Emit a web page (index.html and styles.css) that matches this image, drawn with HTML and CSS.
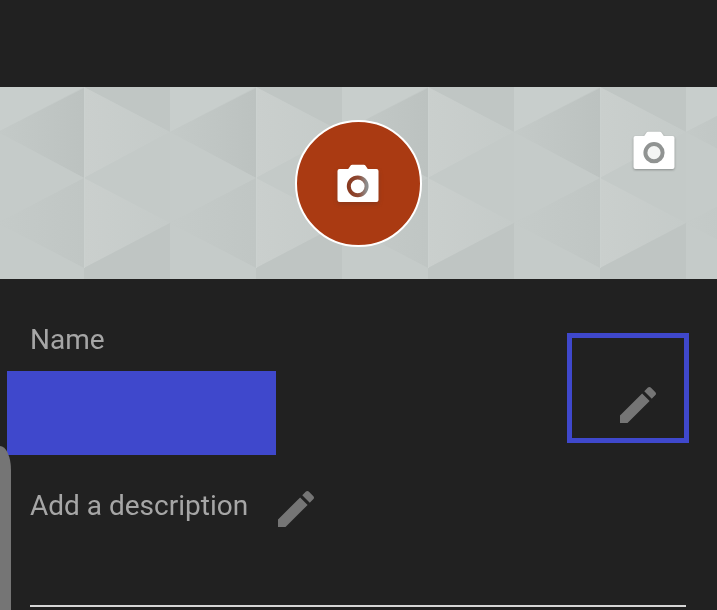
FILE: index.html
```html
<!DOCTYPE html>
<html lang="en">
<head>
<meta charset="utf-8">
<title>Edit channel</title>
<link rel="stylesheet" href="styles.css">
</head>
<body>
<svg class="defs" width="0" height="0" aria-hidden="true">
  <defs>
    <path id="cam" d="M2.5 5H11.2L13.6 1.6Q14.2 .8 15.2 .8H26.8Q27.8 .8 28.4 1.6L30.8 5H39.5Q41.5 5 41.5 7V36Q41.5 38 39.5 38H2.5Q.5 38 .5 36V7Q.5 5 2.5 5Z"/>
    <path id="pen" d="M3 17.25V21h3.75L17.81 9.94l-3.75-3.75L3 17.25zM20.71 7.04c.39-.39.39-1.02 0-1.41l-2.34-2.34c-.39-.39-1.02-.39-1.41 0l-1.83 1.83 3.75 3.75 1.83-1.83z"/>
    <linearGradient id="ring-grad" x1="0" x2="1" y1="0" y2="0">
      <stop offset="0" stop-color="#8a3a20"/>
      <stop offset="0.55" stop-color="#8f4a35"/>
      <stop offset="1" stop-color="#8e8e8e"/>
    </linearGradient>
    <linearGradient id="shade" x1="0" x2="1" y1="0" y2="0">
      <stop offset="0" stop-color="#c4cac8"/>
      <stop offset="1" stop-color="#bcc2c0"/>
    </linearGradient>
    <linearGradient id="shade-soft" x1="0" x2="1" y1="0" y2="0">
      <stop offset="0" stop-color="#c5cbc9"/>
      <stop offset="1" stop-color="#c0c6c4"/>
    </linearGradient>
    <linearGradient id="shine" x1="0" x2="1" y1="0" y2="0">
      <stop offset="0" stop-color="#cacfcd"/>
      <stop offset="1" stop-color="#c5cbc9"/>
    </linearGradient>
  </defs>
</svg>
<div class="top-spacer"></div>
<header class="banner">
  <svg class="pattern" width="717" height="192" viewBox="0 0 717 192" aria-hidden="true">
    <defs>
      <pattern id="tri" width="172" height="192" patternUnits="userSpaceOnUse" x="-2">
        <rect width="172" height="192" fill="#c4cac8"/>
        <polygon points="0,0 86,0 0,45" fill="#c8cecc"/>
        <polygon points="0,45 86,1 86,91" fill="url(#shade)"/>
        <polygon points="86,0 172,0 172,45" fill="#c0c6c4"/>
        <polygon points="86,0 172,45 86,91" fill="url(#shine)"/>
        <polygon points="172,45 86,91 172,136" fill="#c4cac8"/>
        <polygon points="0,45 86,91 0,136" fill="#c5cbc9"/>
        <polygon points="0,136 86,91 86,181" fill="url(#shade-soft)"/>
        <polygon points="86,91 172,136 86,181" fill="url(#shine)"/>
        <polygon points="86,181 172,136 172,192 86,192" fill="#bfc5c3"/>
        <polygon points="0,136 86,181 86,192 0,192" fill="#c5cbc9"/>
        <rect x="86" width="1" height="181" fill="#cbd1cf"/>
      </pattern>
    </defs>
    <rect width="717" height="192" fill="url(#tri)"/>
  </svg>
  <div class="avatar">
    <svg class="camera" width="42" height="39" viewBox="0 0 42 39" aria-hidden="true">
      <use href="#cam" fill="#fff"/>
      <circle cx="20.7" cy="22.3" r="8.9" fill="#fff" stroke="url(#ring-grad)" stroke-width="4"/>
    </svg>
  </div>
  <svg class="camera-corner" width="42" height="39" viewBox="0 0 42 39" aria-hidden="true">
    <use href="#cam" fill="#fff"/>
    <circle cx="21" cy="21.7" r="8.6" fill="#f4f5f4" stroke="#909392" stroke-width="4"/>
  </svg>
</header>
<main class="form">
  <section class="name-row">
    <div class="name-field">
      <div class="label name-label">Name</div>
      <div class="redacted"></div>
    </div>
    <div class="highlight">
      <svg class="pencil" width="48" height="48" viewBox="0 0 24 24" aria-hidden="true"><use href="#pen"/></svg>
    </div>
  </section>
  <section class="description-row">
    <div class="label">Add a description</div>
    <svg class="pencil" width="48" height="48" viewBox="0 0 24 24" aria-hidden="true"><use href="#pen"/></svg>
  </section>
  <div class="underline"></div>
</main>
<div class="side-handle"></div>
</body>
</html>
```
FILE: styles.css
```css
* { box-sizing: border-box; }
html, body { margin: 0; height: 100%; }
body {
  position: relative;
  overflow: hidden;
  background: #212121;
  font-family: Roboto, "Noto Sans", sans-serif;
}
.defs { position: absolute; }
.top-spacer { height: 87px; }
.banner {
  position: relative;
  height: 192px;
  overflow: hidden;
  background: #c4cac8;
}
.pattern { display: block; }
.avatar {
  position: absolute;
  left: 294.5px;
  top: 32.5px;
  width: 127px;
  height: 127px;
  border: 2px solid #fff;
  border-radius: 50%;
  background: #aa3a12;
  display: flex;
  align-items: center;
  justify-content: center;
}
.camera {
  display: block;
  filter: drop-shadow(0 2px 2px rgba(60, 50, 50, .3));
}
.camera-corner {
  position: absolute;
  left: 633px;
  top: 44px;
  filter: drop-shadow(0 1px 1px rgba(0, 0, 0, .3));
}
.form { display: flex; flex-direction: column; }
.name-row {
  display: flex;
  justify-content: space-between;
  align-items: flex-start;
  padding: 40px 28px 0 7px;
}
.label {
  color: #a6a6a6;
  font-size: 28px;
  line-height: 41px;
  padding-left: 30px;
  will-change: transform;
}
.name-label { line-height: 42px; padding-left: 23px; }
.redacted {
  width: 269px;
  height: 84px;
  margin-top: 10px;
  background: #3f48cc;
}
.highlight {
  width: 122px;
  height: 110px;
  margin-top: 14px;
  border: 5px solid #3f48cc;
  padding: 43px 0 0 42px;
}
.pencil { display: block; fill: #757575; }
.description-row {
  display: flex;
  align-items: flex-start;
  gap: 24px;
  margin-top: 30px;
}
.underline {
  height: 2px;
  margin: 72px 31px 0 30px;
  background: #d6d6d6;
}
.side-handle {
  position: absolute;
  left: 0;
  top: 446px;
  width: 11px;
  height: 180px;
  background: #757575;
  border-top-right-radius: 11px 24px;
}
```
